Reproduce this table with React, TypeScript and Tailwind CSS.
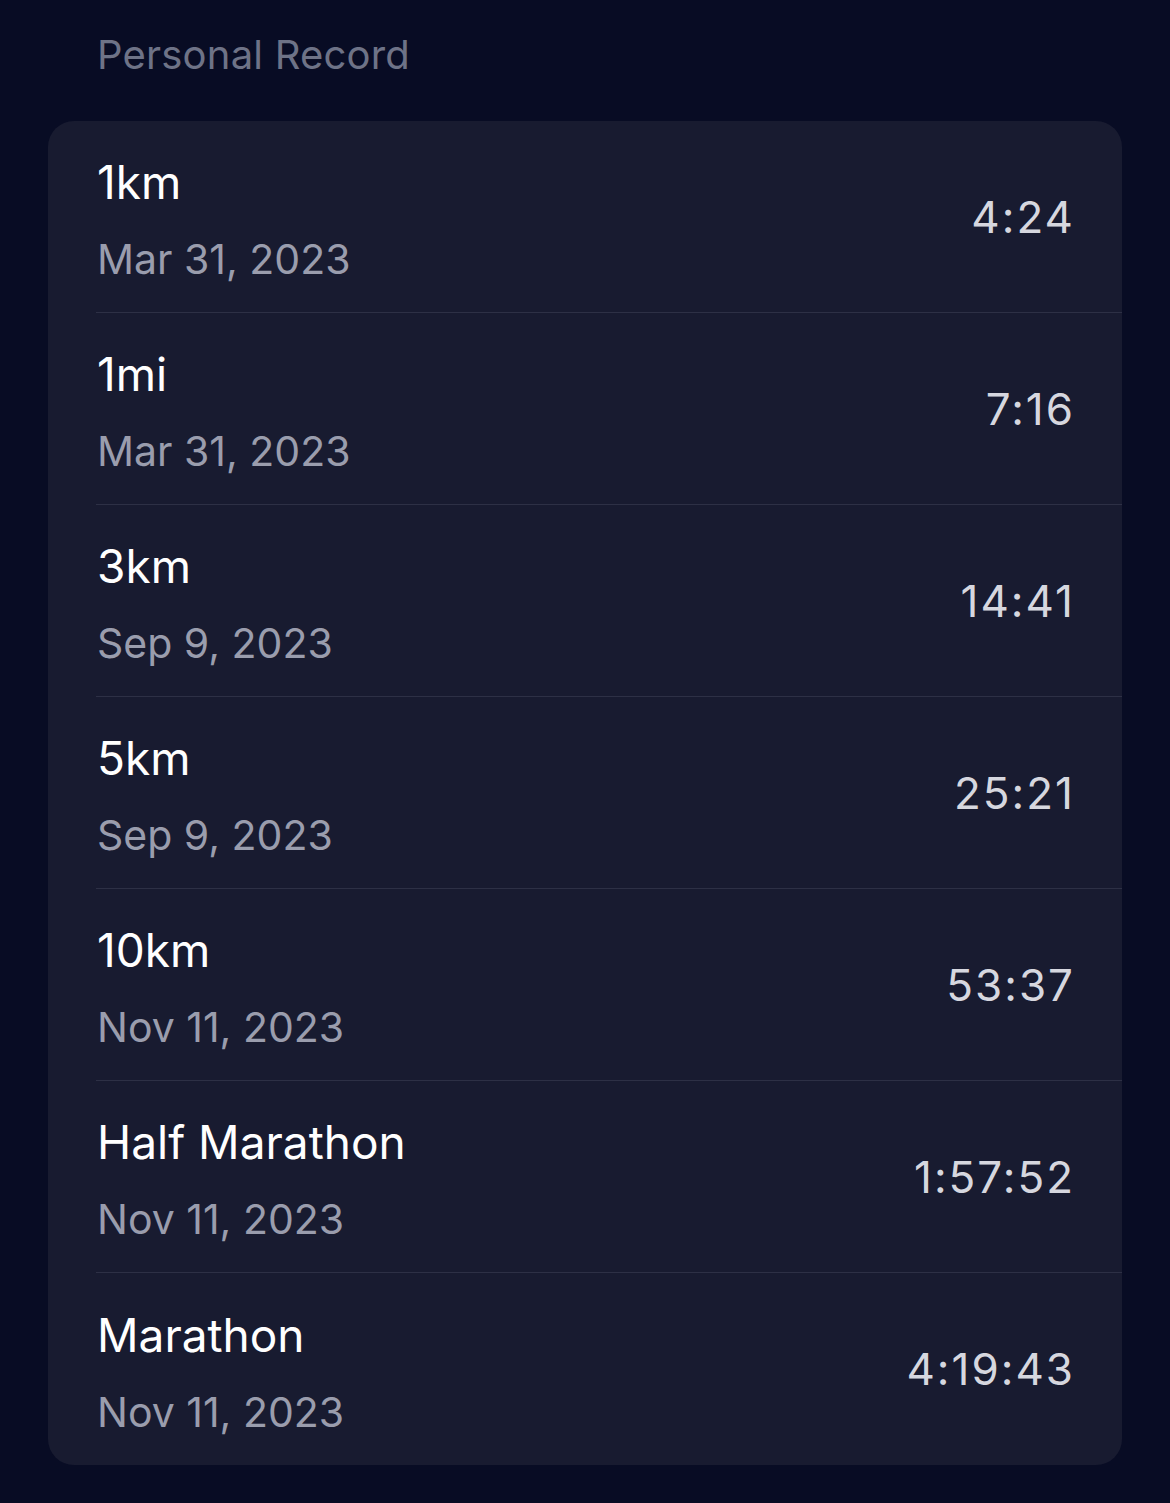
const records = [
  { label: "1km", date: "Mar 31, 2023", time: "4:24" },
  { label: "1mi", date: "Mar 31, 2023", time: "7:16" },
  { label: "3km", date: "Sep 9, 2023", time: "14:41" },
  { label: "5km", date: "Sep 9, 2023", time: "25:21" },
  { label: "10km", date: "Nov 11, 2023", time: "53:37" },
  { label: "Half Marathon", date: "Nov 11, 2023", time: "1:57:52" },
  { label: "Marathon", date: "Nov 11, 2023", time: "4:19:43" },
];

export default function App() {
  return (
    <div className="min-h-screen bg-[#080c24] px-[48px] pt-[28px] pb-[38px] font-['Inter',sans-serif]">
      {/* Section header */}
      <h2 className="pl-[49px] mb-[39px] text-[40px] leading-[54px] text-[#6e7387] tracking-[0.2px]">
        Personal Record
      </h2>

      {/* Records card */}
      <div className="rounded-[26px] bg-[#181b30] pl-[48px] overflow-hidden">
        {records.map((r, i) => (
          <div
            key={r.label}
            className={`flex items-center justify-between pr-[47px] h-[192px] ${
              i < records.length - 1 ? "border-b border-[#2d3045]" : ""
            }`}
          >
            <div className="flex flex-col pl-[1px] pt-[34px] pb-[26px]">
              <span className="text-[46px] leading-[54px] text-white">{r.label}</span>
              <span className="mt-[23px] text-[41px] leading-[54px] text-[#9a9dad]">{r.date}</span>
            </div>
            <span className="text-[44px] leading-[54px] tracking-[2px] text-[#d6d7df]">{r.time}</span>
          </div>
        ))}
      </div>
    </div>
  );
}
